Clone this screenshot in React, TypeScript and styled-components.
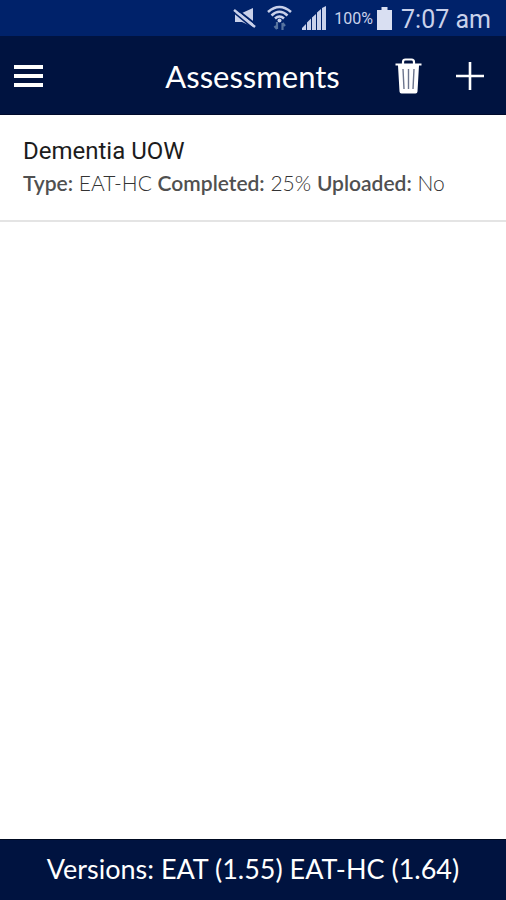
import React from "react";
import styled, { createGlobalStyle } from "styled-components";

const GlobalStyle = createGlobalStyle`
  *, *::before, *::after { box-sizing: border-box; }
  body { margin: 0; background: #fff; font-family: Lato, sans-serif; }
`;

const Screen = styled.div`
  display: flex;
  flex-direction: column;
  min-height: 100vh;
  background: #fff;
`;

const StatusBar = styled.div`
  display: flex;
  align-items: center;
  justify-content: flex-end;
  height: 36px;
  padding-right: 15px;
  background: #00226a;
  color: #c9d1ea;
  font-family: Roboto, sans-serif;

  svg { display: block; flex: none; }
`;

const StatusIcons = styled.div`
  display: flex;
  align-items: center;
  gap: 10px;
  margin-right: 8px;
`;

const Percent = styled.span`
  padding-top: 2px;
  font-size: 16px;
  line-height: 20px;
  margin-right: 4px;
`;

const Clock = styled.time`
  padding-top: 3px;
  font-size: 25px;
  line-height: 32px;
  margin-left: 9px;
`;

const Header = styled.header`
  display: grid;
  grid-template-columns: 1fr auto 1fr;
  align-items: center;
  height: 79px;
  padding: 2px 15px 0 14px;
  background: #001340;
  border-bottom: 1px solid #000a2b;
`;

const Title = styled.h1`
  margin: 0;
  color: #fff;
  font-size: 31px;
  font-weight: 400;
  line-height: 40px;
`;

const Actions = styled.div`
  display: flex;
  justify-content: flex-end;
  gap: 20px;
`;

const IconButton = styled.button<{ $align?: string }>`
  display: grid;
  align-items: center;
  justify-items: ${(p) => p.$align ?? "center"};
  width: 42px;
  height: 44px;
  padding: 0;
  border: 0;
  background: none;
  color: #fff;
  cursor: pointer;

  svg { display: block; }
`;

const List = styled.ul`
  flex: 1;
  margin: 0;
  padding: 0;
  list-style: none;
`;

const Item = styled.li`
  padding: 20px 23px 22px;
  border-bottom: 2px solid #e4e4e4;
`;

const ItemName = styled.h2`
  margin: 0;
  color: #1c1c1c;
  font-family: Roboto, sans-serif;
  font-size: 24px;
  font-weight: 400;
  line-height: 32px;
`;

const ItemDetail = styled.p`
  margin: 0;
  color: #333;
  font-size: 21px;
  font-weight: 300;
  line-height: 31px;

  strong {
    color: #505050;
    font-weight: 600;
  }
`;

const Footer = styled.footer`
  height: 61px;
  padding: 10px 16px;
  background: #001340;
  border-top: 1px solid #000a20;
  color: #fff;
  font-size: 27px;
  line-height: 38px;
  text-align: center;
`;

const MutedIcon = () => (
  <svg width="24" height="22" viewBox="0 0 24 22" aria-hidden="true">
    <path d="M2 6h7L20 1v19L9 15H2z" fill="#c9d1ea" />
    <path d="M2.500 1.500L23.500 18" stroke="#00226a" strokeWidth="2" />
    <path d="M1 3l21 17" stroke="#c9d1ea" strokeWidth="2.600" />
    <path d="M0 4.800l20 16.500" stroke="#00226a" strokeWidth="1.600" />
  </svg>
);

const WifiIcon = () => (
  <svg width="25" height="26" viewBox="0 0 25 26" fill="none" aria-hidden="true">
    <g stroke="#c9d1ea" strokeWidth="2.600">
      <path d="M1 7Q12.500-3 24 7" />
      <path d="M4.500 10.500Q12.500 3 20.500 10.500" />
      <path d="M8 13.500Q12.500 9.500 17 13.500" />
    </g>
    <circle cx="12.500" cy="15.500" r="2" fill="#c9d1ea" />
    <path d="M10 17v7M7.500 21l2.500 3M15.500 25v-7M18 21l-2.500-3" stroke="#56739f" strokeWidth="2.200" />
  </svg>
);

const SignalIcon = () => (
  <svg width="24" height="24" viewBox="0 0 24 24" fill="#c9d1ea" aria-hidden="true">
    <path d="M0 24v-2l4-4v6zM5 24v-7.500l4-4v11.500zM10 24V11.500L14 8v16zM15 24V6.500L19 3V24zM20 24V2l4-2v24z" />
  </svg>
);

const BatteryIcon = () => (
  <svg width="15" height="23" viewBox="0 0 15 23" fill="#d9dff2" aria-hidden="true">
    <path d="M4.500 0h6v3H15v20H0V3h4.500z" />
  </svg>
);

const MenuIcon = () => (
  <svg width="29" height="22" viewBox="0 0 29 22" fill="#fff" aria-hidden="true">
    <path d="M0 0h29v4H0zM0 9h29v4H0zM0 18h29v4H0z" />
  </svg>
);

const TrashIcon = () => (
  <svg width="27" height="36" viewBox="0 0 27 36" fill="none" aria-hidden="true">
    <path d="M8 6V4q0-2.500 2.500-2.500h6Q19 1.500 19 4v2" stroke="#fff" strokeWidth="2.200" />
    <path d="M.5 5.500h26v2H24l-1.500 26q-.1 2-2 2h-14q-1.900 0-2-2L3 7.500H.5z" fill="#fff" />
    <path d="M8 11l1 20M13.500 11v20M19 11l-1 20" stroke="#6b748c" strokeWidth="1.400" />
  </svg>
);

const PlusIcon = () => (
  <svg width="28" height="28" viewBox="0 0 28 28" stroke="#fff" strokeWidth="2.600" aria-hidden="true">
    <path d="M14 0v28M0 14h28" />
  </svg>
);

const assessments = [
  { name: "Dementia UOW", type: "EAT-HC", completed: 25, uploaded: false },
];

export default function App() {
  return (
    <Screen>
      <GlobalStyle />
      <StatusBar>
        <StatusIcons>
          <MutedIcon />
          <WifiIcon />
          <SignalIcon />
        </StatusIcons>
        <Percent>100%</Percent>
        <BatteryIcon />
        <Clock>7:07 am</Clock>
      </StatusBar>
      <Header>
        <IconButton type="button" aria-label="Menu" $align="start">
          <MenuIcon />
        </IconButton>
        <Title>Assessments</Title>
        <Actions>
          <IconButton type="button" aria-label="Delete">
            <TrashIcon />
          </IconButton>
          <IconButton type="button" aria-label="Add">
            <PlusIcon />
          </IconButton>
        </Actions>
      </Header>
      <List>
        {assessments.map((a) => (
          <Item key={a.name}>
            <ItemName>{a.name}</ItemName>
            <ItemDetail>
              <strong>Type:</strong> {a.type} <strong>Completed:</strong> {a.completed}%{" "}
              <strong>Uploaded:</strong> {a.uploaded ? "Yes" : "No"}
            </ItemDetail>
          </Item>
        ))}
      </List>
      <Footer>Versions: EAT (1.55) EAT-HC (1.64)</Footer>
    </Screen>
  );
}
